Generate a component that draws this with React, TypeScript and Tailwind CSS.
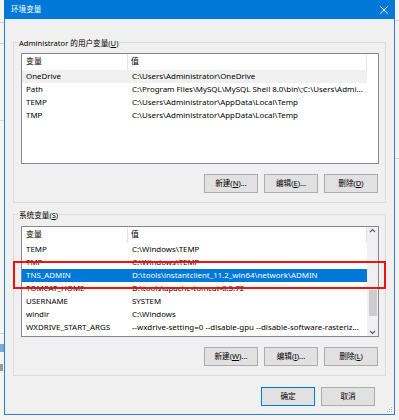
import React from "react";

const font = { fontFamily: '"Noto Sans", "Noto Sans CJK SC", sans-serif' };

type Row = { name: string; value: string; selected?: "gray" | "blue" };

const userVars: Row[] = [
  { name: "OneDrive", value: "C:\\Users\\Administrator\\OneDrive", selected: "gray" },
  { name: "Path", value: "C:\\Program Files\\MySQL\\MySQL Shell 8.0\\bin\\;C:\\Users\\Admi..." },
  { name: "TEMP", value: "C:\\Users\\Administrator\\AppData\\Local\\Temp" },
  { name: "TMP", value: "C:\\Users\\Administrator\\AppData\\Local\\Temp" },
];

const sysVars: Row[] = [
  { name: "TEMP", value: "C:\\Windows\\TEMP" },
  { name: "TMP", value: "C:\\Windows\\TEMP" },
  { name: "TNS_ADMIN", value: "D:\\tools\\instantclient_11.2_win64\\network\\ADMIN", selected: "blue" },
  { name: "TOMCAT_HOME", value: "D:\\tools\\apache-tomcat-8.5.72" },
  { name: "USERNAME", value: "SYSTEM" },
  { name: "windir", value: "C:\\Windows" },
  { name: "WXDRIVE_START_ARGS", value: "--wxdrive-setting=0 --disable-gpu --disable-software-rasteriz..." },
];

function Btn({ label, keyChar, dots, primary }: { label: string; keyChar?: string; dots?: boolean; primary?: boolean }) {
  return (
    <div
      className={`w-[54px] h-[19px] flex items-center justify-center bg-[#e1e1e1] border text-[7.6px] text-black whitespace-nowrap ${
        primary ? "border-[#0078d7]" : "border-[#adadad]"
      }`}
    >
      {label}
      {keyChar && (
        <>
          (<span className="underline">{keyChar}</span>)
        </>
      )}
      {dots && "..."}
    </div>
  );
}

function ListView({ rows, scroll }: { rows: Row[]; scroll?: boolean }) {
  return (
    <div className="relative w-[358px] h-[111px] border border-[#828790] bg-white overflow-hidden text-[7.9px] text-black">
      <div className="flex h-[16px] w-[345px] items-center">
        <div className="w-[106px] h-full flex items-center pl-[4px] border-r border-[#e5e5e5]">变量</div>
        <div className="flex-1 h-full flex items-center pl-[3px] border-r border-[#e5e5e5]">值</div>
      </div>
      {rows.map((r) => (
        <div
          key={r.name}
          className={`flex h-[13px] w-[345px] items-center whitespace-nowrap ${
            r.selected === "blue" ? "bg-[#0078d7] text-white" : r.selected === "gray" ? "bg-[#f0f0f0]" : ""
          }`}
        >
          <div className="w-[106px] pl-[4px] overflow-hidden">{r.name}</div>
          <div className="flex-1 pl-[4px] overflow-hidden">{r.value}</div>
        </div>
      ))}
      {scroll && (
        <div className="absolute right-0 top-0 bottom-0 w-[11px] bg-[#f0f0f0] flex flex-col items-center">
          <div className="h-[11px] flex items-center justify-center">
            <svg width="7" height="5" viewBox="0 0 7 5">
              <path d="M1 4 L3.5 1.5 L6 4" fill="none" stroke="#606060" strokeWidth="1.2" />
            </svg>
          </div>
          <div className="flex-1 w-full flex flex-col pt-[56px] pb-[14px] items-center">
            <div className="w-[8px] h-[26px] bg-[#cdcdcd]" />
          </div>
          <div className="h-[11px] flex items-center justify-center">
            <svg width="7" height="5" viewBox="0 0 7 5">
              <path d="M1 1 L3.5 3.5 L6 1" fill="none" stroke="#606060" strokeWidth="1.2" />
            </svg>
          </div>
        </div>
      )}
    </div>
  );
}

function Group({ title, keyChar, children, className }: { title: string; keyChar: string; children: React.ReactNode; className: string }) {
  return (
    <div className={`relative border border-[#dcdcdc] pl-[7px] pr-[6px] ${className}`}>
      <span className="absolute left-[4px] top-0 -translate-y-1/2 bg-[#f0f0f0] px-[1px] text-[7.6px] leading-[10px] text-black whitespace-nowrap">
        {title}(<span className="underline">{keyChar}</span>)
      </span>
      {children}
    </div>
  );
}

export default function App() {
  return (
    <div className="relative w-[399px] h-[420px] overflow-hidden bg-[#f4f4f4]" style={font}>
      {/* desktop behind */}
      <div className="absolute left-0 top-[22px] w-[4px] h-px bg-[#d0d0d0]" />
      <div className="absolute left-0 top-[43px] w-[4px] h-px bg-[#d0d0d0]" />
      <div className="absolute left-0 top-[120px] w-[4px] h-px bg-[#d8d8d8]" />
      <div className="absolute left-0 top-[333px] w-[4px] h-px bg-[#d0d0d0]" />
      <div className="absolute left-0 top-[344px] w-[4px] h-[8px] bg-[#7aa7dc]" />
      <div className="absolute left-0 top-[364px] w-[3px] h-[7px] bg-[#9a9a9a]" />
      <div className="absolute right-0 top-[20px] w-[4px] h-px bg-[#d0d0d0]" />
      <div className="absolute right-0 top-[158px] w-[4px] h-px bg-[#d0d0d0]" />

      {/* window */}
      <div className="absolute left-[4px] top-0 w-[391px] h-[415px] border-x border-b border-[#2a7fd4] bg-[#f0f0f0] flex flex-col">
        <div className="h-[19px] -mx-px bg-[#0078d7] flex items-center justify-between pl-[7px] pr-[7px] text-white">
          <span className="text-[7.6px]">环境变量</span>
          <svg width="8" height="8" viewBox="0 0 8 8">
            <path d="M0.5 0.5 L7.5 7.5 M7.5 0.5 L0.5 7.5" stroke="white" strokeWidth="1" />
          </svg>
        </div>

        <div className="px-[8px] flex flex-col">
          <Group title="Administrator 的用户变量" keyChar="U" className="mt-[23px] h-[161px] pt-[10px]">
            <ListView rows={userVars} />
            <div className="flex justify-end gap-[6px] mt-[10px] pr-[1px]">
              <Btn label="新建" keyChar="N" dots />
              <Btn label="编辑" keyChar="E" dots />
              <Btn label="删除" keyChar="D" />
            </div>
          </Group>

          <Group title="系统变量" keyChar="S" className="mt-[11px] h-[162px] pt-[11px]">
            <ListView rows={sysVars} scroll />
            <div className="flex justify-end gap-[6px] mt-[10px] pr-[1px]">
              <Btn label="新建" keyChar="W" dots />
              <Btn label="编辑" keyChar="I" dots />
              <Btn label="删除" keyChar="L" />
            </div>
          </Group>
        </div>

        <div className="flex justify-end gap-[6px] mt-[11px] pr-[19px]">
          <Btn label="确定" primary />
          <Btn label="取消" />
        </div>

        <svg className="absolute right-[1px] bottom-[1px]" width="8" height="8" viewBox="0 0 8 8">
          <rect x="6" y="2" width="1" height="1" fill="#b0b0b0" />
          <rect x="4" y="4" width="1" height="1" fill="#b0b0b0" />
          <rect x="6" y="4" width="1" height="1" fill="#b0b0b0" />
          <rect x="2" y="6" width="1" height="1" fill="#b0b0b0" />
          <rect x="4" y="6" width="1" height="1" fill="#b0b0b0" />
          <rect x="6" y="6" width="1" height="1" fill="#b0b0b0" />
        </svg>
      </div>

      {/* red highlight box */}
      <div className="absolute left-[13px] top-[261px] w-[373px] h-[28px] border-2 border-[#ee1111]" />
    </div>
  );
}
